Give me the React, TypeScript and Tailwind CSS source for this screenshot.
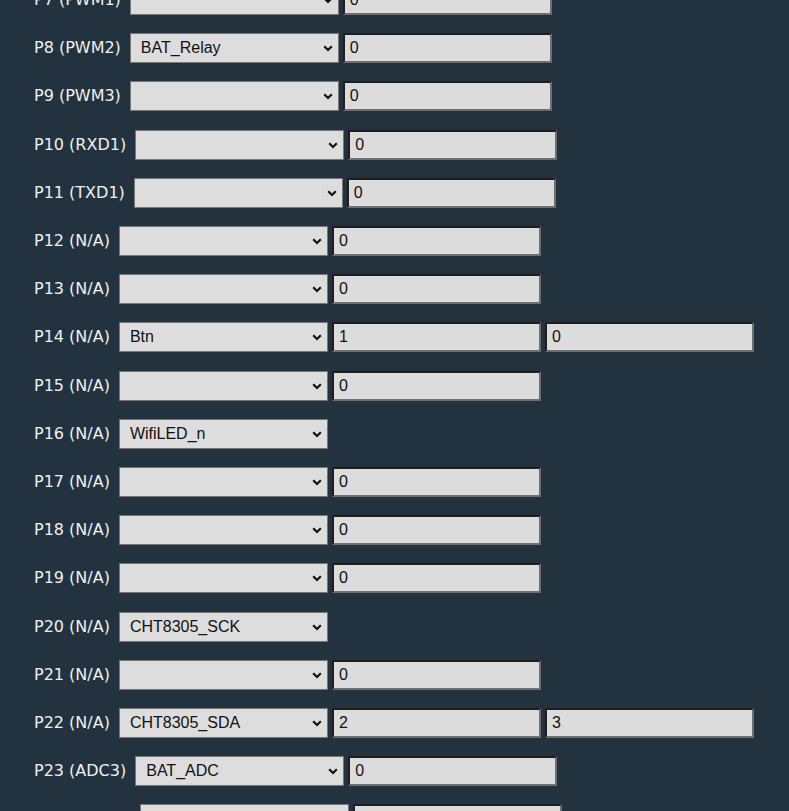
import React from "react";

type Pin = { label: string; role: string; values: string[] };

const pins: Pin[] = [
  { label: "P7 (PWM1)", role: "", values: ["0"] },
  { label: "P8 (PWM2)", role: "BAT_Relay", values: ["0"] },
  { label: "P9 (PWM3)", role: "", values: ["0"] },
  { label: "P10 (RXD1)", role: "", values: ["0"] },
  { label: "P11 (TXD1)", role: "", values: ["0"] },
  { label: "P12 (N/A)", role: "", values: ["0"] },
  { label: "P13 (N/A)", role: "", values: ["0"] },
  { label: "P14 (N/A)", role: "Btn", values: ["1", "0"] },
  { label: "P15 (N/A)", role: "", values: ["0"] },
  { label: "P16 (N/A)", role: "WifiLED_n", values: [] },
  { label: "P17 (N/A)", role: "", values: ["0"] },
  { label: "P18 (N/A)", role: "", values: ["0"] },
  { label: "P19 (N/A)", role: "", values: ["0"] },
  { label: "P20 (N/A)", role: "CHT8305_SCK", values: [] },
  { label: "P21 (N/A)", role: "", values: ["0"] },
  { label: "P22 (N/A)", role: "CHT8305_SDA", values: ["2", "3"] },
  { label: "P23 (ADC3)", role: "BAT_ADC", values: ["0"] },
  { label: "P24 (PWM4)", role: "", values: [""] },
];

function RoleSelect({ role }: { role: string }) {
  return (
    <div className="relative w-[209px] h-[30px] shrink-0">
      <select
        defaultValue={role}
        className="appearance-none w-full h-full bg-[#dddddd] border border-[#767676] text-[#111] text-[16px] pl-[10px] pr-6 outline-none"
        style={{ fontFamily: '"Liberation Sans", Arial, sans-serif' }}
      >
        <option value={role}>{role}</option>
      </select>
      <svg
        className="absolute right-[6px] top-[12px] pointer-events-none"
        width="10"
        height="7"
        viewBox="0 0 10 7"
      >
        <path d="M1.2 1.2 L5 5 L8.8 1.2" fill="none" stroke="#111" strokeWidth="2.2" />
      </svg>
    </div>
  );
}

function ValueInput({ value }: { value: string }) {
  return (
    <input
      type="text"
      defaultValue={value}
      className="w-[209px] h-[30px] shrink-0 ml-[4px] bg-[#dcdcdc] text-[#111] text-[16px] px-[5px] border-2 border-t-[#1e1e1e] border-l-[#1e1e1e] border-b-[#6e6e6e] border-r-[#6e6e6e] outline-none"
      style={{ fontFamily: '"Liberation Sans", Arial, sans-serif' }}
    />
  );
}

export default function App() {
  return (
    <div className="w-full h-[811px] overflow-hidden bg-[#22333f]">
      <div className="pl-[34px] -mt-[24px] flex flex-col">
        {pins.map((pin) => (
          <div key={pin.label} className="h-[48.2px] flex items-center">
            <span
              className="text-[16px] text-[#f0f0f0] mr-[9px] whitespace-nowrap"
              style={{ fontFamily: '"DejaVu Sans", Verdana, sans-serif' }}
            >
              {pin.label}
            </span>
            <RoleSelect role={pin.role} />
            {pin.values.map((v, i) => (
              <ValueInput key={i} value={v} />
            ))}
          </div>
        ))}
      </div>
    </div>
  );
}
